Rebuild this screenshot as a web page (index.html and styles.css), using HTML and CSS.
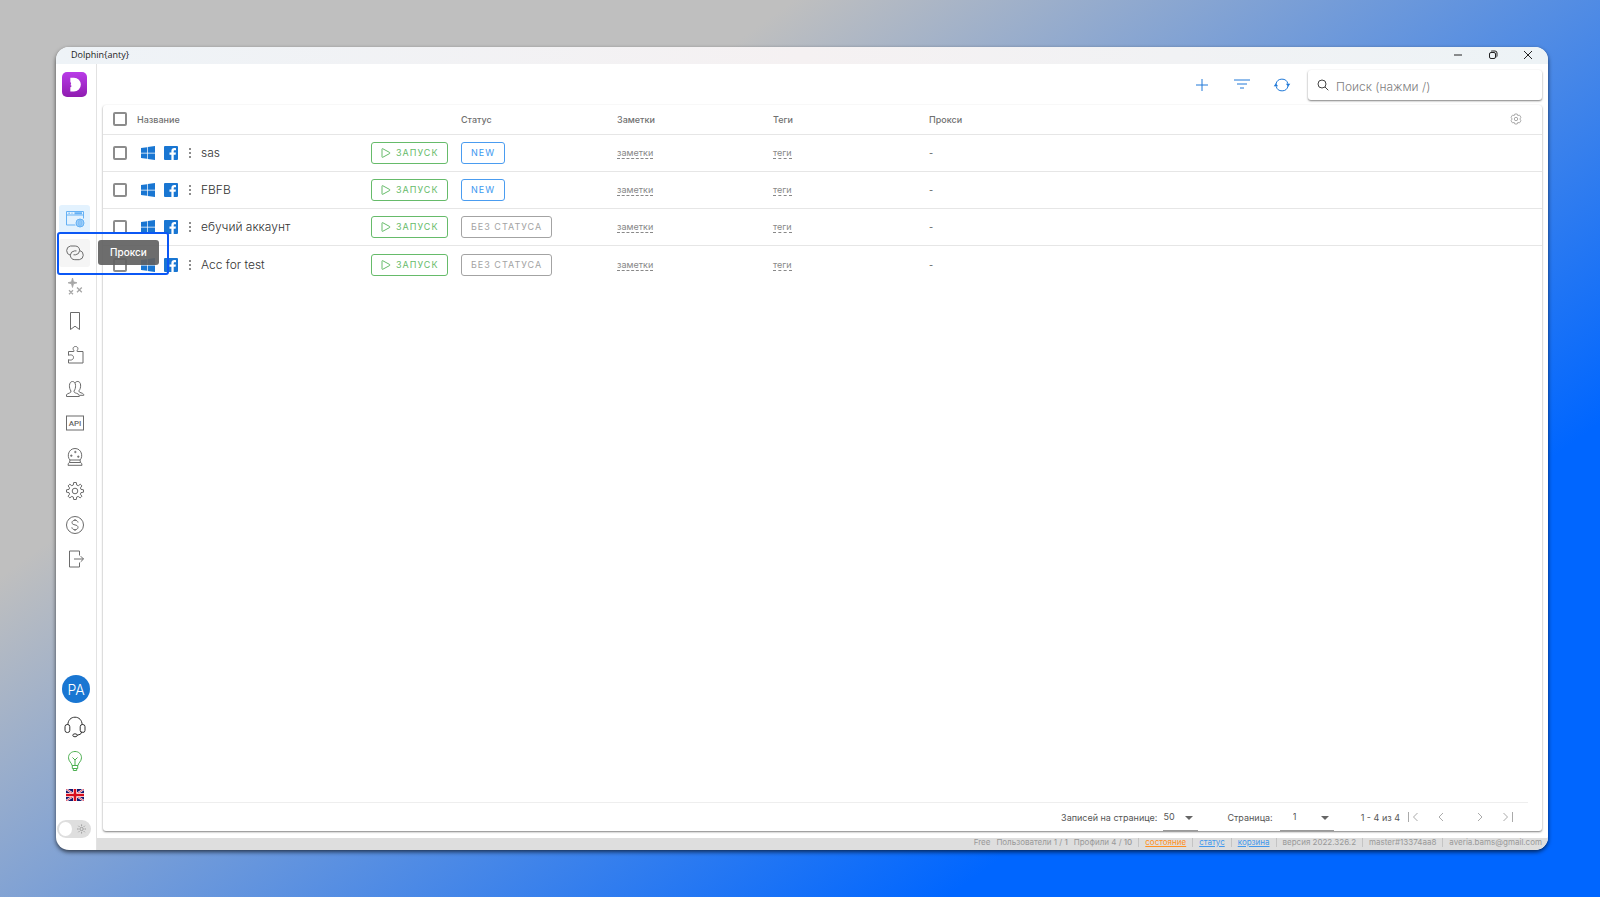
FILE: index.html
```html
<!DOCTYPE html>
<html lang="ru">
<head>
<meta charset="utf-8">
<title>Dolphin{anty}</title>
<link rel="stylesheet" href="styles.css">
</head>
<body>
<svg class="defs" aria-hidden="true">
  <symbol id="win" viewBox="0 0 14 14"><path d="M0 2.1 6 1.2V6.7H0zM6.7 1.1 14 0V6.7H6.7zM0 7.4H6V12.8L0 12zM6.7 7.4H14V14L6.7 12.9z"/></symbol>
  <symbol id="fb" viewBox="0 0 14 14"><path fill-rule="evenodd" d="M1 0H13a1 1 0 0 1 1 1V13a1 1 0 0 1-1 1H9.700V8.700h1.900l.3-2.200H9.700V5.300c0-.7.3-1.100 1.100-1.100H12V2.200C11.700 2.100 11 2 10.300 2 8.500 2 7.400 3.100 7.400 5V6.500H5.500V8.700H7.400V14H1a1 1 0 0 1-1-1V1a1 1 0 0 1 1-1z"/></symbol>
  <symbol id="dots" viewBox="0 0 4 12"><circle cx="2" cy="2" r="1"/><circle cx="2" cy="6" r="1"/><circle cx="2" cy="10" r="1"/></symbol>
  <symbol id="play" viewBox="0 0 10 10"><path d="M1 1.200Q1 .3 1.900.8L8.700 4.500Q9.300 5 8.700 5.500L1.900 9.200Q1 9.700 1 8.800z" fill="none" stroke="currentColor"/></symbol>
</svg>
<div class="window">
  <header class="titlebar">
    <span class="app-name">Dolphin{anty}</span>
    <div class="window-controls">
      <button aria-label="Свернуть"><svg viewBox="0 0 10 10"><path d="M1 5H9"/></svg></button>
      <button aria-label="Восстановить"><svg viewBox="0 0 10 10"><rect x="1.500" y="2.500" width="6" height="6" rx="1.500"/><path d="M3 1.500Q3.300 1 4.200 1H7Q9 1 9 3V6Q9 6.800 8.500 7"/></svg></button>
      <button aria-label="Закрыть"><svg viewBox="0 0 10 10"><path d="M1 1 9 9M9 1 1 9"/></svg></button>
    </div>
  </header>
  <aside class="sidebar">
    <a class="logo" href="#" aria-label="Dolphin"><svg viewBox="0 0 24 24"><path d="M8 5.500H11.500A6.600 6.600 0 0 1 11.500 18.700H8V14.700C9.500 14.200 9.600 12.900 8 12.500 9 11.900 9 10.200 8 9.500z" fill="#fff" stroke="none"/></svg></a>
    <nav class="menu">
      <a class="item active" href="#" aria-label="Браузеры"><svg viewBox="0 0 20 20"><path d="M10.500 16H1.500V2.500H18.500V9.500M1.500 6H18.500M3.300 4.200H5M6.500 4.200H7.500"/><path d="M9.500 4.200H17" stroke-width="2"/><circle cx="15" cy="14" r="4" fill="#b9dcfb"/><path d="M11 14H19M12 12H18M12 16H18M15 10V18M15 10Q11.500 14 15 18M15 10Q18.500 14 15 18" stroke-width=".6"/></svg></a>
      <div class="hovered">
        <a class="item" href="#" aria-label="Прокси"><svg viewBox="0 0 20 20"><path d="M5.300 12.200A4.700 4.700 0 0 1 5.500 3H10.200Q14.300 3.200 14.700 7.500 14.200 11.500 10.500 11.800H8.500"/><path d="M14.700 7.500A4.700 4.700 0 0 1 14.300 16.700H9.800Q5.700 16.500 5.300 12.200 5.800 8.200 9.500 7.900H11.500"/></svg></a>
        <span class="tooltip" role="tooltip">Прокси</span>
      </div>
      <a class="item muted" href="#" aria-label="Сценарии"><svg viewBox="0 0 20 20"><path fill="currentColor" stroke-width=".8" d="M7.500 1 8.500 4.800 12 5.800 8.500 6.800 7.500 10.500 6.500 6.800 3 5.800 6.500 4.800z"/><path stroke-width="1.300" d="M12 10.500 16.800 15.300M16.800 10.500 12 15.300M4 13.300 8 17.300M8 13.300 4 17.300"/></svg></a>
      <a class="item" href="#" aria-label="Закладки"><svg viewBox="0 0 20 20"><path d="M5.500 1.500H14.500V18.500L10 15.200 5.500 18.500z"/></svg></a>
      <a class="item" href="#" aria-label="Расширения"><svg viewBox="0 0 20 20"><path d="M3.500 6.500H8.800V5.200C7.600 4.200 7.800 1.500 10.500 1.500S13.400 4.200 12.200 5.200V6.500H18V18H3.500V14.600C5 15.600 8.500 15.200 8.500 12.400S5 9.500 3.500 10.400z"/></svg></a>
      <a class="item" href="#" aria-label="Пользователи"><svg viewBox="0 0 20 20"><path d="M1.500 17.500V15.800Q1.500 15 4.500 14 6.200 13.400 6 12C3.800 9.500 3.600 2.500 7.500 2.500S11.200 9.500 9 12C8.900 13.300 9.500 13.700 11.500 14.300 14 15.200 14.300 15.800 14.300 17.500zM10 4C11 1.800 15.300 1.500 15.600 6 15.800 8.500 15 10.500 14 11.700 13.900 12.800 14.200 13.200 16 13.800 18.500 14.600 18.800 15.200 18.800 16.300H14.500"/></svg></a>
      <a class="item" href="#" aria-label="API"><svg viewBox="0 0 20 20"><rect x="1.500" y="3" width="17" height="14"/><text x="10" y="13" text-anchor="middle">API</text></svg></a>
      <a class="item" href="#" aria-label="Предсказания"><svg viewBox="0 0 20 20"><path d="M5 13C1.500 9.500 3.500 1.500 10 1.500S18.500 9.500 15 13zM5 13 4.500 15.500H15.500L15 13M3 18.300Q3 15.800 4.500 15.500M17 18.300Q17 15.800 15.500 15.500M3 18.300H17"/><path d="M10.300 3.800V6.200M9.100 5H11.500M6.300 7.500V9.900M5.100 8.700H7.500M13.300 8.500V10.900M12.100 9.700H14.500" stroke-width=".9"/></svg></a>
      <a class="item" href="#" aria-label="Настройки"><svg viewBox="0 0 20 20"><circle cx="10" cy="10" r="2.800"/><path d="M8.700 1.500H11.300L11.700 4 13.300 4.700 15.300 3.200 16.900 4.900 15.400 6.900 16 8.400 18.500 8.800V11.200L16 11.600 15.400 13.200 16.900 15.200 15.200 16.900 13.200 15.400 11.700 16 11.300 18.500H8.700L8.300 16 6.800 15.400 4.800 16.900 3.100 15.200 4.600 13.200 4 11.600 1.500 11.200V8.800L4 8.400 4.600 6.900 3.100 4.900 4.800 3.200 6.800 4.700 8.300 4z"/></svg></a>
      <a class="item" href="#" aria-label="Оплата"><svg viewBox="0 0 20 20"><circle cx="10" cy="10" r="8.500"/><path d="M13 7.500C12.800 5.800 11.500 5.300 10 5.300S7 6 7 7.600C7 10.800 13 9 13 12.300 13 14 11.500 14.700 10 14.700S7 14 6.900 12.300M10 4V5.300M10 14.700V16"/></svg></a>
      <a class="item" href="#" aria-label="Выход"><svg viewBox="0 0 20 20"><path d="M14.500 6.500V2H4.500V18H14.500V13.500M9 10H18.500M15.700 7.200 18.500 10 15.700 12.800"/></svg></a>
    </nav>
    <div class="account">
      <button class="avatar">PA</button>
      <a class="item dark" href="#" aria-label="Поддержка"><svg viewBox="0 0 22 22"><path d="M3.800 9C4 4 7 1.200 11 1.200S18 4 18.200 9M18 15.500Q17.500 19 13 19.300"/><rect x="1" y="8.500" width="4.800" height="8" rx="2.200"/><rect x="16.200" y="8.500" width="4.800" height="8" rx="2.200"/><ellipse cx="11" cy="19.300" rx="2.200" ry="1.500"/></svg></a>
      <a class="item green" href="#" aria-label="Идеи"><svg viewBox="0 0 20 20"><path d="M7 14.500C7 12 3.500 10.500 3.500 6.800 3.500 3 6.300.5 10 .5S16.500 3 16.500 6.800C16.500 10.500 13 12 13 14.500zM7.300 14.500V17.500H12.700V14.500M8.300 17.500V19.500H11.700V17.500M10 14.500V9L7.500 6.500M10 9 12.500 6.500"/></svg></a>
      <button class="flag" aria-label="English"><svg viewBox="0 0 18 12"><path fill="#15186f" d="M0 0H18V12H0z"/><path d="M0 0 18 12M18 0 0 12" stroke="#fff" stroke-width="2"/><path d="M0 0 18 12M18 0 0 12" stroke="#d4213d" stroke-width=".8"/><path d="M9 0V12M0 6H18" stroke="#fff" stroke-width="4"/><path d="M9 0V12M0 6H18" stroke="#d80f1e" stroke-width="2.600"/></svg></button>
      <label class="theme"><input type="checkbox" aria-label="Тема"><svg viewBox="0 0 10 10"><circle cx="5" cy="5" r="1.800"/><path d="M5 0V1.800M5 8.200V10M0 5H1.800M8.200 5H10M1.500 1.500 2.700 2.700M7.300 7.300 8.500 8.500M8.500 1.500 7.300 2.700M2.700 7.300 1.500 8.500"/></svg></label>
    </div>
  </aside>
  <main class="main">
    <div class="toolbar">
      <button aria-label="Создать"><svg viewBox="0 0 16 16"><path d="M8 2V14M2 8H14"/></svg></button>
      <button aria-label="Фильтр"><svg viewBox="0 0 16 16"><path d="M0 3H16M3 7H13M6 11H10"/></svg></button>
      <button aria-label="Обновить"><svg viewBox="0 0 16 16"><path d="M2 7A6.100 6.100 0 0 1 13.900 6.800M14 9A6.100 6.100 0 0 1 2.100 9.200"/><path d="M-.3 9.200 1.900 6.200 4.100 9.200zM11.900 6.800H16.300L14.100 9.800z" fill="currentColor" stroke="none"/></svg></button>
      <label class="search"><svg viewBox="0 0 12 12"><circle cx="5" cy="5" r="4"/><path d="M8 8 11.300 11.300"/></svg><input type="search" placeholder="Поиск (нажми /)" aria-label="Поиск"></label>
    </div>
    <section class="card">
      <table class="profiles">
        <colgroup><col class="c-check"><col class="c-name"><col class="c-run"><col class="c-status"><col class="c-mid"><col class="c-mid"><col><col class="c-gear"></colgroup>
        <thead><tr><th><input type="checkbox" aria-label="Выбрать все"></th><th colspan="2">Название</th><th>Статус</th><th>Заметки</th><th>Теги</th><th>Прокси</th><th><button class="gear" aria-label="Настройка колонок"><svg viewBox="0 0 12 12"><path d="M4.800 1H7.200L7.700 2.500 9.600 2.200 10.900 4.300 9.900 6 10.900 7.700 9.600 9.800 7.700 9.500 7.200 11H4.800L4.300 9.500 2.400 9.800 1.100 7.700 2.100 6 1.100 4.300 2.400 2.200 4.300 2.500z"/><circle cx="6" cy="6" r="1.700"/></svg></button></th></tr></thead>
        <tbody>
          <tr><td><input type="checkbox" aria-label="sas"></td><td><div class="profile"><svg class="os"><use href="#win"/></svg><svg class="os"><use href="#fb"/></svg><svg class="dots"><use href="#dots"/></svg><span>sas</span></div></td><td><button class="run"><svg><use href="#play"/></svg>ЗАПУСК</button></td><td><button class="status new">NEW</button></td><td><a class="edit" href="#">заметки</a></td><td><a class="edit" href="#">теги</a></td><td colspan="2">-</td></tr>
          <tr><td><input type="checkbox" aria-label="FBFB"></td><td><div class="profile"><svg class="os"><use href="#win"/></svg><svg class="os"><use href="#fb"/></svg><svg class="dots"><use href="#dots"/></svg><span>FBFB</span></div></td><td><button class="run"><svg><use href="#play"/></svg>ЗАПУСК</button></td><td><button class="status new">NEW</button></td><td><a class="edit" href="#">заметки</a></td><td><a class="edit" href="#">теги</a></td><td colspan="2">-</td></tr>
          <tr><td><input type="checkbox" aria-label="ебучий аккаунт"></td><td><div class="profile"><svg class="os"><use href="#win"/></svg><svg class="os"><use href="#fb"/></svg><svg class="dots"><use href="#dots"/></svg><span>ебучий аккаунт</span></div></td><td><button class="run"><svg><use href="#play"/></svg>ЗАПУСК</button></td><td><button class="status">БЕЗ СТАТУСА</button></td><td><a class="edit" href="#">заметки</a></td><td><a class="edit" href="#">теги</a></td><td colspan="2">-</td></tr>
          <tr><td><input type="checkbox" aria-label="Acc for test"></td><td><div class="profile"><svg class="os"><use href="#win"/></svg><svg class="os"><use href="#fb"/></svg><svg class="dots"><use href="#dots"/></svg><span>Acc for test</span></div></td><td><button class="run"><svg><use href="#play"/></svg>ЗАПУСК</button></td><td><button class="status">БЕЗ СТАТУСА</button></td><td><a class="edit" href="#">заметки</a></td><td><a class="edit" href="#">теги</a></td><td colspan="2">-</td></tr>
        </tbody>
      </table>
      <div class="pager">
        <label for="size">Записей на странице:</label>
        <span class="select"><select id="size"><option>50</option></select></span>
        <label class="page-label" for="page">Страница:</label>
        <span class="select wide"><select id="page"><option>1</option></select></span>
        <span class="range">1 - 4 из 4</span>
        <div class="arrows">
          <button aria-label="Первая"><svg viewBox="0 0 12 12"><path d="M1.500 1V11M10.500 2 6.500 6 10.500 10"/></svg></button>
          <button aria-label="Назад"><svg viewBox="0 0 12 12"><path d="M8 2 4 6 8 10"/></svg></button>
          <button class="next" aria-label="Вперёд"><svg viewBox="0 0 12 12"><path d="M4 2 8 6 4 10"/></svg></button>
          <button aria-label="Последняя"><svg viewBox="0 0 12 12"><path d="M1.500 2 5.500 6 1.500 10M10.500 1V11"/></svg></button>
        </div>
      </div>
    </section>
    <footer class="footer">
      <div class="plan"><span>Free</span><span>Пользователи 1 / <b>1</b></span><span>Профили 4 / <b>10</b></span></div>
      <div><a class="warn" href="#">состояние</a></div><div><a href="#">статус</a></div><div><a href="#">корзина</a></div>
      <div>версия 2022.326.2</div><div>master#13374aa8</div><div>averia.bams@gmail.com</div>
    </footer>
  </main>
</div>
</body>
</html>
```
FILE: styles.css
```css
*, *::before, *::after { box-sizing: border-box; }
body {
  margin: 0;
  min-height: 100vh;
  padding: 47px 52px 47px 56px;
  display: flex;
  background: linear-gradient(144deg, #bfbfbf 28%, #0066ff 77%);
  font-family: Inter, "Noto Sans", sans-serif;
  font-size: 9px;
  color: #555;
}
button, input, select { font: inherit; color: inherit; }
button { padding: 0; border: 0; background: none; }
a { color: inherit; text-decoration: none; }
svg { display: block; fill: none; stroke: currentColor; }
.defs { position: absolute; width: 0; height: 0; }

.window {
  flex: 1;
  display: grid;
  grid-template: auto 1fr / 41px 1fr;
  background: #fff;
  border-radius: 13px;
  overflow: hidden;
  box-shadow: 0 2px 4px rgba(0, 0, 0, .65);
}
.titlebar {
  grid-column: 1 / -1;
  height: 17px;
  display: flex;
  align-items: center;
  justify-content: space-between;
  padding: 0 15px 2px 15px;
  background: linear-gradient(90deg, #eef3f7, #f5f1f2 50%, #edf3f6);
}
.app-name { font-family: "Open Sans", sans-serif; color: #222; }
.window-controls { display: flex; gap: 25px; color: #222; }
.window-controls svg { width: 10px; height: 10px; }

.sidebar {
  display: flex;
  flex-direction: column;
  border-right: 1px solid #e2e2e2;
  padding: 8px 4px 12px 3px;
}
.logo {
  width: 25px;
  height: 25px;
  margin-left: 3px;
  border-radius: 5px;
  background: linear-gradient(#b93be8, #8f1cb0);
}
.menu { display: grid; gap: 6px; margin-top: 108px; }
.item {
  width: 31px;
  height: 28px;
  display: grid;
  place-items: center;
  border-radius: 3px;
  color: #6b6b6b;
}
.item svg { width: 20px; height: 20px; }
.item text { font: 500 8px Roboto, sans-serif; fill: #666; stroke: none; }
.active { background: #e3f2fe; color: #64b1f5; }
.muted { color: #a6a6a6; }
.dark { color: #333; }
.dark svg { width: 22px; height: 22px; }
.green { color: #4caf50; }
.hovered { position: relative; }
.hovered .item { background: #f5f5f5; }
.hovered::after {
  content: "";
  position: absolute;
  left: -2px;
  top: -7px;
  width: 112px;
  height: 43px;
  border: 2px solid #0b57f5;
  border-radius: 3px;
  z-index: 2;
}
.tooltip {
  position: absolute;
  left: 39px;
  top: 1px;
  z-index: 3;
  padding: 5px 12px;
  border-radius: 3px;
  background: rgba(97, 97, 97, .92);
  color: #fff;
  font-size: 10px;
  font-weight: 500;
  line-height: 15px;
}
.account {
  margin-top: auto;
  display: grid;
  gap: 6px;
}
.avatar {
  width: 28px;
  height: 28px;
  margin: 0 0 4px 3px;
  border-radius: 50%;
  background: #1976d2;
  color: #fff;
  font-size: 14px;
  font-weight: 300;
}
.flag { height: 28px; width: 31px; display: grid; place-items: center; }
.flag svg { width: 18px; height: 12px; stroke: none; }
.theme {
  display: flex;
  align-items: center;
  gap: 5px;
  width: 34px;
  height: 18px;
  margin: 5px 0 0 -2px;
  padding: 0 5px 0 2px;
  border-radius: 9px;
  background: #dedede;
  color: #999;
}
.theme input { appearance: none; width: 14px; height: 14px; margin: 0; border-radius: 50%; background: #fff; }
.theme svg { width: 10px; height: 10px; }

.main { display: flex; flex-direction: column; min-width: 0; }
.toolbar {
  display: flex;
  align-items: center;
  justify-content: flex-end;
  gap: 24px;
  padding: 6px 6px 5px;
  color: #2079d8;
}
.toolbar button svg { width: 16px; height: 16px; overflow: visible; }
.search {
  display: flex;
  align-items: center;
  gap: 7px;
  width: 234px;
  height: 30px;
  margin-left: -6px;
  padding: 0 9px;
  border-radius: 3px;
  box-shadow: 0 1px 2px rgba(0, 0, 0, .5);
  color: #444;
}
.search svg { width: 12px; height: 12px; }
.search input { flex: 1; min-width: 0; border: 0; padding: 2px 0 0; background: none; outline: 0; font-size: 12px; font-weight: 300; }
.search input::placeholder { color: #808080; }

.card {
  flex: 1;
  display: flex;
  flex-direction: column;
  margin: 0 6px 7px;
  border-radius: 3px;
  box-shadow: 0 1px 2px rgba(0, 0, 0, .5);
}
.profiles { width: 100%; table-layout: fixed; border-collapse: collapse; }
.c-check { width: 34px; }
.c-name { width: 234px; }
.c-run { width: 90px; }
.c-status, .c-mid { width: 156px; }
.c-gear { width: 36px; }
th, td { padding: 0; height: 37px; text-align: left; border-bottom: 1px solid #e6e6e6; }
th { height: 29px; font-weight: 500; color: #707070; }
tbody tr:last-child td { border-bottom: 0; height: 39px; }
.profiles input {
  display: block;
  appearance: none;
  width: 14px;
  height: 14px;
  margin: 0 0 0 10px;
  border: 2px solid #8c8c8c;
  border-radius: 2px;
}
.gear { display: block; color: #aaa; }
.gear svg { width: 12px; height: 12px; margin-left: 4px; }
.profile { display: flex; align-items: center; padding-left: 4px; font-size: 12px; font-weight: 300; color: #333; }
.os { width: 14px; height: 14px; margin-right: 9px; fill: #1976d2; stroke: none; }
.dots { width: 4px; height: 12px; margin: 0 9px 0 1px; fill: #666; stroke: none; }
.run, .status {
  display: flex;
  align-items: center;
  height: 22px;
  padding: 0 9px;
  border: 1px solid #a3a3a3;
  border-radius: 3px;
  letter-spacing: 1px;
  color: #a3a3a3;
}
.run { gap: 5px; border-color: #66bb6a; color: #66bb6a; }
.run svg { width: 10px; height: 10px; }
.new { border-color: #4a9cf0; color: #3d98f0; }
.edit { border-bottom: 1px dashed #888; color: #888; }

.pager {
  display: flex;
  align-items: center;
  height: 29px;
  margin: auto 14px 0 0;
  border-top: 1px solid #eee;
  justify-content: flex-end;
}
.select { position: relative; width: 35px; height: 27px; margin-left: 6px; border-bottom: 1px solid #999; }
.select select { width: 100%; height: 100%; border: 0; padding: 0; appearance: none; background: none; }
.select::after {
  content: "";
  position: absolute;
  right: 5px;
  top: 12px;
  border: 4px solid transparent;
  border-top-color: #666;
  border-bottom: 0;
  pointer-events: none;
}
.page-label { margin-left: 29px; }
.wide { width: 54px; margin-left: 7px; }
.wide select { padding-left: 13px; }
.range { margin-left: 27px; }
.arrows { display: flex; gap: 16px; margin: 0 14px 0 7px; color: #aaa; }
.arrows svg { width: 12px; height: 12px; }
.next { margin-left: 11px; }

.footer {
  display: flex;
  justify-content: flex-end;
  align-items: flex-end;
  height: 12px;
  padding: 0 6px 3px 0;
  background: #dedede;
  color: #999;
  font-size: 8px;
  line-height: 9px;
}
.footer > * + * { margin-left: 6px; padding-left: 6px; border-left: 1px solid #c4c4c4; }
.plan { display: flex; gap: 6px; }
.footer a { color: #4298ec; text-decoration: underline; }
.footer .warn { color: #ff9021; }
.footer b { font-weight: 500; }
```
